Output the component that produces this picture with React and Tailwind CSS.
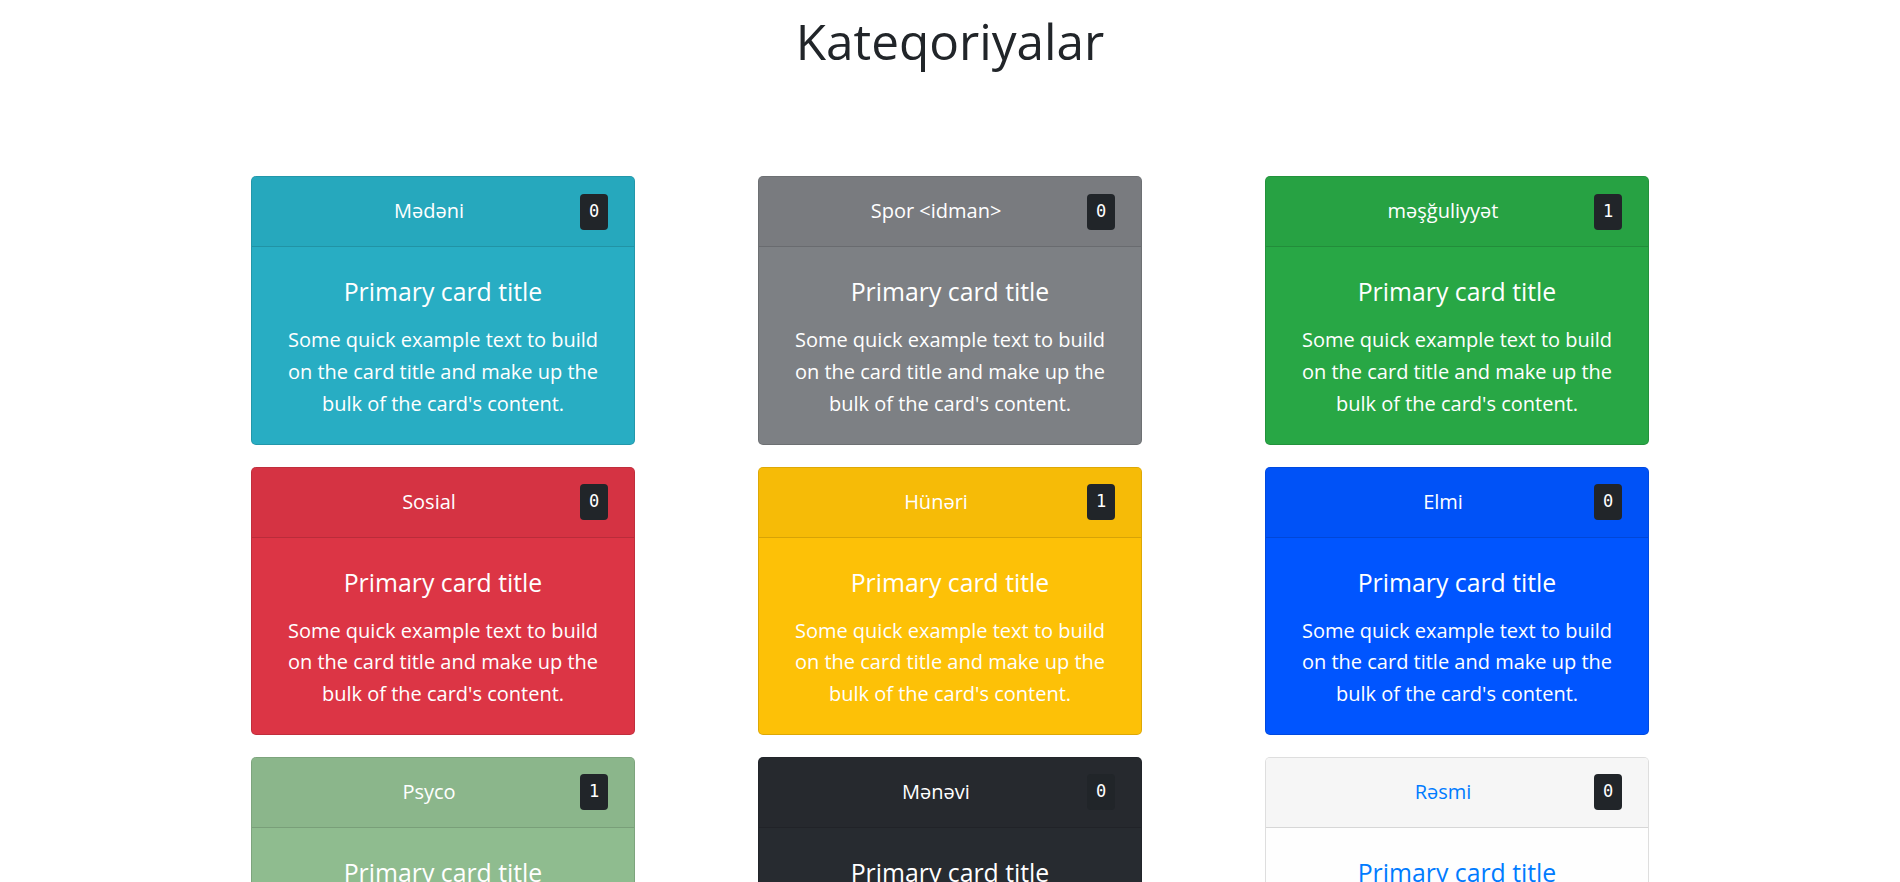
import React from "react";

const categories = [
  { name: "Mədəni", count: 0, body: "bg-[#28adc3]", head: "bg-[#26a8bd]", text: "text-white" },
  { name: "Spor <idman>", count: 0, body: "bg-[#7d8084]", head: "bg-[#797b7f]", text: "text-white" },
  { name: "məşğuliyyət", count: 1, body: "bg-[#28a745]", head: "bg-[#27a243]", text: "text-white" },
  { name: "Sosial", count: 0, body: "bg-[#dc3545]", head: "bg-[#d53343]", text: "text-white" },
  { name: "Hünəri", count: 1, body: "bg-[#fdc107]", head: "bg-[#f6bb07]", text: "text-white" },
  { name: "Elmi", count: 0, body: "bg-[#0055ff]", head: "bg-[#0052f7]", text: "text-white" },
  { name: "Psyco", count: 1, body: "bg-[#8fbc8f]", head: "bg-[#8bb68b]", text: "text-white" },
  { name: "Mənəvi", count: 0, body: "bg-[#272b30]", head: "bg-[#26292e]", text: "text-white" },
  { name: "Rəsmi", count: 0, body: "bg-[#fefefe]", head: "bg-[#f6f6f6]", text: "text-[#007bff]" },
];

function CategoryCard({ cat }) {
  return (
    <div className={`flex flex-col overflow-hidden rounded-[5px] border border-[rgba(0,0,0,0.125)] ${cat.body} ${cat.text}`}>
      <div className={`flex h-[70px] items-center border-b border-[rgba(0,0,0,0.125)] px-[26px] ${cat.head}`}>
        <span className="flex-1 pb-[1px] text-center text-[20px]">{cat.name}</span>
        <kbd className="flex h-[36px] w-[28px] items-center justify-center rounded-[4px] bg-[#212529] text-[17px] text-white" style={{ fontFamily: '"DejaVu Sans Mono", monospace' }}>
          {cat.count}
        </kbd>
      </div>
      <div className="px-[24px] pt-[29px] pb-[24px] text-center">
        <h5 className="mb-[17px] text-[24.8px] leading-[31px]">Primary card title</h5>
        <p className="text-[20px] leading-[31.7px]">
          Some quick example text to build on the card title and make up the bulk of the card's content.
        </p>
      </div>
    </div>
  );
}

export default function App() {
  return (
    <div className="min-h-screen bg-white text-[#212529]" style={{ fontFamily: '"Open Sans", sans-serif' }}>
      <h1 className="pt-[12px] text-center text-[49.5px] leading-[1.2]">Kateqoriyalar</h1>
      <div className="mx-auto mt-[105px] grid w-[1398px] grid-cols-3 gap-x-[123px] gap-y-[22px] pb-10">
        {categories.map((cat) => (
          <CategoryCard key={cat.name} cat={cat} />
        ))}
      </div>
    </div>
  );
}
